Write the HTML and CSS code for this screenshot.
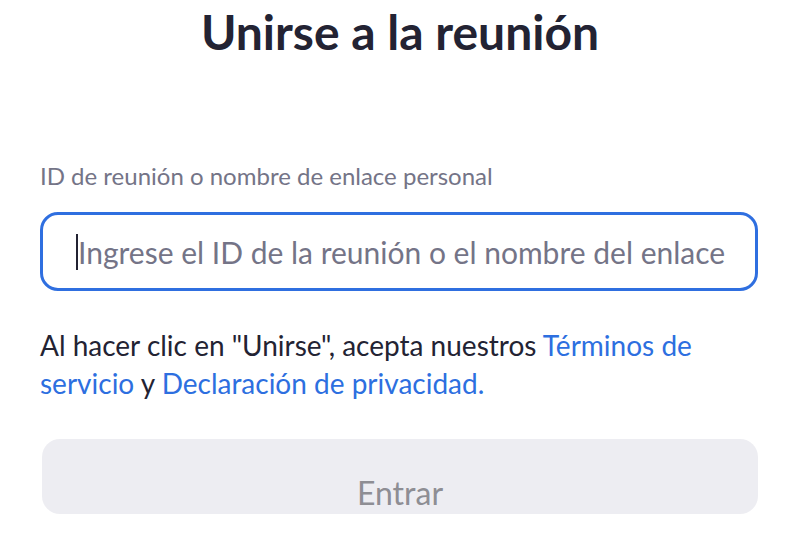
FILE: index.html
```html
<!DOCTYPE html>
<html lang="es">
<head>
<meta charset="utf-8">
<link rel="stylesheet" href="styles.css">
</head>
<body>
<main class="join">
  <h1 class="title">Unirse a la reunión</h1>
  <label class="label" for="mid">ID de reunión o nombre de enlace personal</label>
  <div class="field">
    <span class="caret"></span>
    <span class="placeholder">Ingrese el ID de la reunión o el nombre del enlace</span>
  </div>
  <p class="terms">Al hacer clic en "Unirse", acepta nuestros <a class="link">Términos de servicio</a> y <a class="link">Declaración de privacidad.</a></p>
  <div class="button">Entrar</div>
</main>
</body>
</html>
```

FILE: styles.css
```css
* { box-sizing: border-box; }
html, body { margin: 0; background: #ffffff; }
body { font-family: Lato, "Open Sans", sans-serif; }
.join {
  width: 798px;
  padding: 0 40px;
  display: flex;
  flex-direction: column;
}
.title {
  margin: 0;
  padding-top: 2px;
  padding-left: 2px;
  text-align: center;
  font-size: 48px;
  line-height: 60px;
  font-weight: 700;
  color: #232333;
}
.label {
  margin-top: 100px;
  font-size: 24px;
  line-height: 28px;
  color: #747487;
}
.field {
  margin-top: 22px;
  height: 79px;
  border: 3px solid #2f6fe0;
  border-radius: 18px;
  display: flex;
  align-items: center;
  padding-left: 33px;
}
.caret {
  width: 2px;
  height: 36px;
  background: #232333;
}
.placeholder {
  font-size: 30px;
  color: #747487;
  white-space: nowrap;
}
.terms {
  margin: 35px 0 0;
  font-size: 28px;
  line-height: 38px;
  color: #232333;
}
.link { color: #2d6fe0; }
.button {
  margin-top: 37px;
  margin-left: 2px;
  height: 75px;
  border-radius: 18px;
  background: #ededf2;
  color: #8e8e94;
  font-size: 32px;
  line-height: 1.2;
  display: flex;
  align-items: flex-end;
  justify-content: center;
  padding-bottom: 2px;
}
```
